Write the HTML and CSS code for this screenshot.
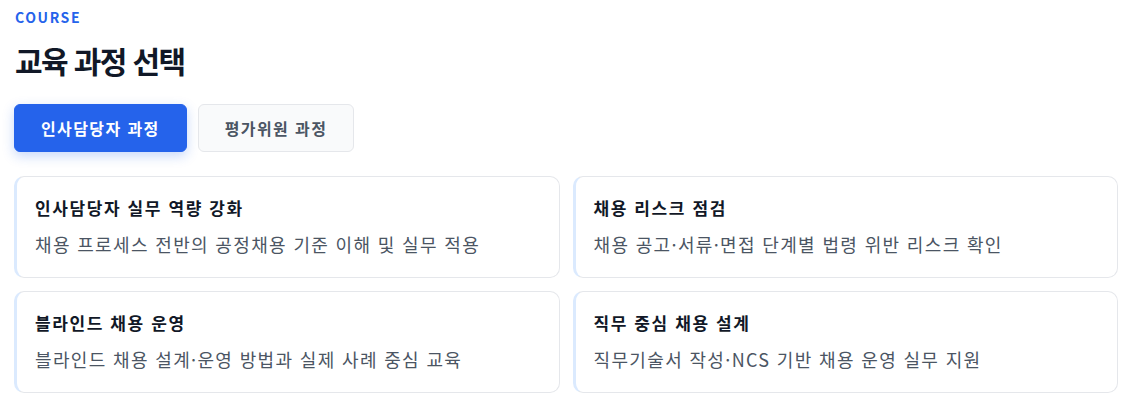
FILE: index.html
```html
<!DOCTYPE html>
<html lang="ko">
<head>
    <meta charset="utf-8">
    <title>교육 과정 선택</title>
    <link rel="stylesheet" href="styles.css">
</head>
<body>
    <section class="course-section">
        <p class="eyebrow">COURSE</p>
        <h2 class="section-title">교육 과정 선택</h2>

        <div class="tabs">
            <button class="tab active" type="button">인사담당자 과정</button>
            <button class="tab" type="button">평가위원 과정</button>
        </div>

        <div class="course-grid">
            <div class="course-card">
                <h3>인사담당자 실무 역량 강화</h3>
                <p>채용 프로세스 전반의 공정채용 기준 이해 및 실무 적용</p>
            </div>
            <div class="course-card">
                <h3>채용 리스크 점검</h3>
                <p>채용 공고·서류·면접 단계별 법령 위반 리스크 확인</p>
            </div>
            <div class="course-card">
                <h3>블라인드 채용 운영</h3>
                <p>블라인드 채용 설계·운영 방법과 실제 사례 중심 교육</p>
            </div>
            <div class="course-card">
                <h3>직무 중심 채용 설계</h3>
                <p>직무기술서 작성·NCS 기반 채용 운영 실무 지원</p>
            </div>
        </div>
    </section>
</body>
</html>
```

FILE: styles.css
```css
* {
    box-sizing: border-box;
}

body {
    margin: 0;
    background: #ffffff;
    font-family: "Noto Sans CJK KR", "Noto Sans", sans-serif;
    color: #111827;
}

.course-section {
    padding: 6px 12px 0 14px;
}

.eyebrow {
    margin: 0 0 0 1px;
    font-size: 14px;
    line-height: 22px;
    font-weight: 700;
    letter-spacing: 1.6px;
    color: #2563eb;
}

.section-title {
    margin: 12px 0 0 1px;
    font-size: 30px;
    line-height: 40px;
    font-weight: 700;
    letter-spacing: -1.6px;
    color: #111827;
}

.tabs {
    display: flex;
    gap: 11px;
    margin-top: 24px;
}

.tab {
    height: 48px;
    padding: 0 26px;
    border: 1px solid #e5e7eb;
    border-radius: 6px;
    background: #f9fafb;
    color: #4b5563;
    font-family: inherit;
    font-size: 16px;
    font-weight: 700;
    letter-spacing: 1.4px;
    cursor: pointer;
}

.tab.active {
    border-color: #2563eb;
    background: #2563eb;
    color: #ffffff;
    box-shadow: 0 4px 12px rgba(37, 99, 235, 0.25);
}

.course-grid {
    display: grid;
    grid-template-columns: 1fr 1fr;
    gap: 13px 13px;
    margin-top: 24px;
}

.course-card {
    height: 102px;
    padding: 19px 20px 0 18px;
    border: 1px solid #e5e7eb;
    border-left: 3px solid #dbeafe;
    border-radius: 10px;
    background: #ffffff;
}

.course-card h3 {
    margin: 0;
    font-size: 17px;
    line-height: 24px;
    font-weight: 700;
    letter-spacing: 1.6px;
    color: #111827;
}

.course-card p {
    margin: 11px 0 0;
    font-size: 18px;
    line-height: 26px;
    letter-spacing: 1.35px;
    color: #4b5563;
}
```
